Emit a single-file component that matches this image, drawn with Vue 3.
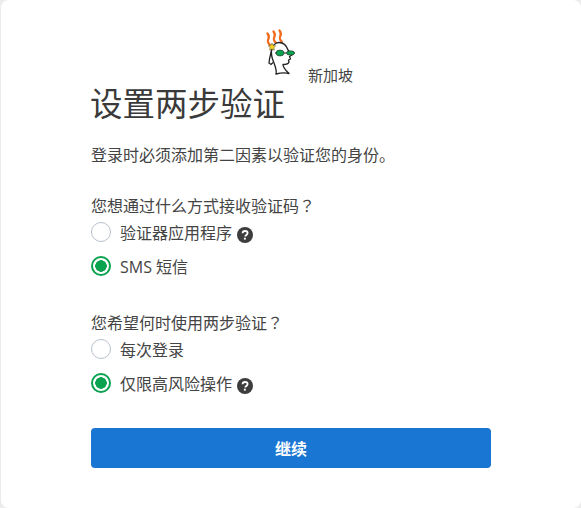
<template>
  <div class="page">
    <div class="card">
      <div class="brand">
        <svg class="logo" width="32" height="48" viewBox="0 0 32 48">
          <g fill="none" stroke="#f26b1d" stroke-width="2.300" stroke-linecap="round">
            <path d="M5 17c-3-3-2.500-4.500-1.500-6.500s.5-3-1-5" />
            <path d="M11 15c-3-3-2.500-4.500-1.500-6.500s.5-3-1-5" />
            <path d="M17 14c-3-3-2.500-4.500-1.500-6.500s.5-3-1-5" />
          </g>
          <path d="M11 46c1-3-.5-7-2-11-1.500-3.500-3-8-2.500-12C7 18 10 14.500 14 14.500c4.500 0 7.500 3 9 7.500l4 5-2.500 1.500 1 2.500-2 1 .5 2c-.5 2-2.500 2.500-6 2.500 0 3.500 3 6 6 9-4-1-9-.5-13 .5z" fill="#fff" stroke="#222" stroke-width="1.300" stroke-linejoin="round" />
          <path d="M7 20l-2.500 11-.5 4 2 1.500 2-2" fill="none" stroke="#222" stroke-width="1.300" />
          <path d="M7 15l1.200 2.400 2.600.4-1.900 1.800.5 2.600-2.400-1.200-2.400 1.200.5-2.600-1.900-1.800 2.600-.4z" fill="#f7d117" stroke="#555" stroke-width=".5" />
          <path d="M10 25h20" stroke="#222" stroke-width="1" />
          <ellipse cx="15" cy="25" rx="4" ry="3" fill="#0aa34f" stroke="#222" stroke-width=".6" />
          <ellipse cx="25.500" cy="25" rx="4" ry="2.200" fill="#0aa34f" stroke="#222" stroke-width=".6" />
        </svg>
        <span class="region">新加坡</span>
      </div>
      <h1 class="title">设置两步验证</h1>
      <p class="desc">登录时必须添加第二因素以验证您的身份。</p>

      <div v-for="group in groups" :key="group.name" class="group">
        <div class="question">{{ group.question }}<span class="mark">？</span></div>
        <label v-for="opt in group.options" :key="opt.value" class="option">
          <input v-model="group.selected" class="radio" type="radio" :name="group.name" :value="opt.value">
          <span class="option-label">{{ opt.label }}</span>
          <svg v-if="opt.help" class="help" width="16" height="16" viewBox="0 0 16 16">
            <circle cx="8" cy="8" r="8" fill="#3d3d3d" />
            <path d="M5.600 6.300c0-1.500 1-2.300 2.500-2.300s2.500.8 2.500 2.100c0 1.900-2.300 1.800-2.300 3.400" fill="none" stroke="#fff" stroke-width="1.800" />
            <rect x="6.900" y="10.700" width="1.900" height="1.900" fill="#fff" />
          </svg>
        </label>
      </div>

      <button class="submit" type="button">继续</button>
    </div>
  </div>
</template>

<script setup>
import { reactive } from 'vue';

const groups = reactive([
  {
    name: 'method',
    question: '您想通过什么方式接收验证码',
    selected: 'sms',
    options: [
      { value: 'app', label: '验证器应用程序', help: true },
      { value: 'sms', label: 'SMS 短信', help: false }
    ]
  },
  {
    name: 'when',
    question: '您希望何时使用两步验证',
    selected: 'risk',
    options: [
      { value: 'always', label: '每次登录', help: false },
      { value: 'risk', label: '仅限高风险操作', help: true }
    ]
  }
]);
</script>

<style>
html, body {
  margin: 0;
  background: #ececec;
}
</style>

<style scoped>
.page {
  height: 508px;
  overflow: hidden;
  font-family: "Open Sans", "Noto Sans CJK SC", sans-serif;
  color: #444;
}

.card {
  box-sizing: border-box;
  height: 508px;
  background: #fff;
  margin-left: 1px;
  border-radius: 8px;
  padding: 28px 90px 0;
}

.brand {
  display: flex;
  align-items: flex-end;
  height: 56px;
  padding-left: 174px;
}

.logo {
  margin-bottom: 8px;
}

.region {
  margin-left: 11px;
  margin-bottom: -1px;
  font-size: 15px;
  line-height: 20px;
  color: #444;
}

.title {
  margin: 0 0 0 -1px;
  font-size: 32.500px;
  font-weight: 400;
  line-height: 40px;
  color: #3a3a3a;
}

.desc {
  margin: 19px 0 0;
  font-size: 16px;
  line-height: 24px;
}

.group {
  margin-bottom: 31px;
}

.desc + .group {
  margin-top: 30px;
}

.question {
  font-size: 16px;
  line-height: 17px;
}

.mark {
  font-family: "Noto Sans CJK TC", sans-serif;
}

.option {
  display: flex;
  align-items: center;
  height: 34px;
  font-size: 16px;
}

.radio {
  appearance: none;
  box-sizing: border-box;
  width: 20px;
  height: 20px;
  margin: 0 9px 0 0;
  border: 1px solid #b9c0cc;
  border-radius: 50%;
  background: #fff;
}

.radio:checked {
  border: 2px solid #09a24f;
  background: radial-gradient(circle, #09a24f 0, #09a24f 5.500px, #fff 6px);
}

.help {
  margin: 5px 0 0 5px;
}

.group:last-of-type {
  margin-bottom: 28px;
}

.submit {
  display: block;
  width: 400px;
  height: 40px;
  border: 0;
  border-radius: 4px;
  background: #1976d2;
  color: #fff;
  font-family: inherit;
  font-size: 16px;
  font-weight: 700;
}
</style>
